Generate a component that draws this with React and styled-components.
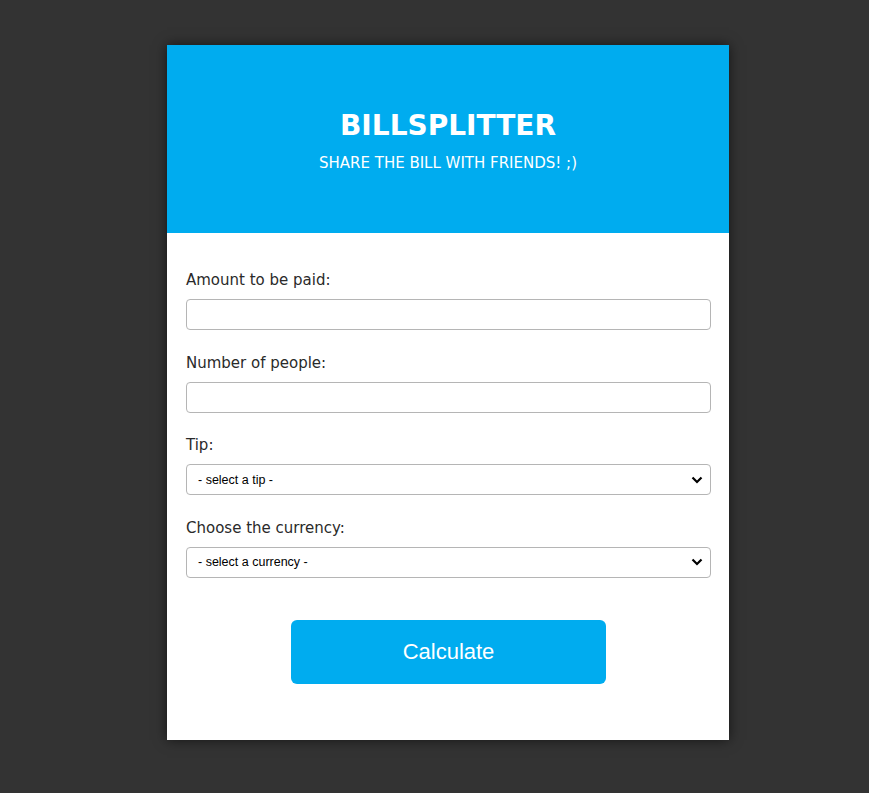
import React from 'react'
import styled, { createGlobalStyle } from 'styled-components'

const GlobalStyle = createGlobalStyle`
body {
    margin: 0;
    background-color: #333333;
    font-family: "DejaVu Sans", "Open Sans", sans-serif;
}
`

const chevron = encodeURIComponent(
  '<svg xmlns="http://www.w3.org/2000/svg" width="12" height="8" viewBox="0 0 12 8"><path d="M1.5 1.5 6 6l4.5-4.5" fill="none" stroke="#000" stroke-width="2.2"/></svg>'
)

const App = () => {
  return (
    <Page>
        <GlobalStyle />
        <Card>

            <Header>
                <Title>BILLSPLITTER</Title>
                <Subtitle>SHARE THE BILL WITH FRIENDS! ;)</Subtitle>
            </Header>

            <Form onSubmit={e => e.preventDefault()}>
                <Field>
                    <Label htmlFor="amount">Amount to be paid:</Label>
                    <Input id="amount" type="text" />
                </Field>

                <Field>
                    <Label htmlFor="people">Number of people:</Label>
                    <Input id="people" type="text" />
                </Field>

                <Field>
                    <Label htmlFor="tip">Tip:</Label>
                    <Select id="tip" defaultValue="">
                        <option value="">- select a tip -</option>
                        <option value="10">10%</option>
                        <option value="15">15%</option>
                        <option value="20">20%</option>
                    </Select>
                </Field>

                <Field>
                    <Label htmlFor="currency">Choose the currency:</Label>
                    <Select id="currency" defaultValue="">
                        <option value="">- select a currency -</option>
                        <option value="eur">EUR</option>
                        <option value="usd">USD</option>
                    </Select>
                </Field>

                <ButtonRow>
                    <Button type="submit">Calculate</Button>
                </ButtonRow>
            </Form>

        </Card>
    </Page>
  )
}

export default App

const Page = styled.div`
padding: 45px 0 53px 167px;
`

const Card = styled.div`
width: 562px;
background-color: #ffffff;
box-shadow: 0 0 12px rgba(0, 0, 0, 0.6);
`

const Header = styled.header`
height: 188px;
background-color: #00acef;
color: #ffffff;
display: flex;
flex-direction: column;
align-items: center;
justify-content: center;
gap: 11px;
padding-top: 2px;
box-sizing: border-box;
`

const Title = styled.h1`
margin: 0;
font-size: 28px;
font-weight: 700;
line-height: 34px;
`

const Subtitle = styled.p`
margin: 0;
font-size: 15px;
line-height: 18px;
`

const Form = styled.form`
padding: 39px 18px 56px 19px;
`

const Field = styled.div`
display: flex;
flex-direction: column;
gap: 10px;
margin-bottom: 24.5px;
`

const Label = styled.label`
font-size: 15px;
line-height: 17px;
color: #2a2a2a;
`

const Input = styled.input`
height: 31px;
box-sizing: border-box;
border: 1px solid #b5b5b5;
border-radius: 4px;
padding: 0 10px;
font-size: 14px;
`

const Select = styled.select`
height: 31px;
box-sizing: border-box;
border: 1px solid #b5b5b5;
border-radius: 4px;
padding: 0 8px 0 11px;
appearance: none;
background: #ffffff url("data:image/svg+xml,${chevron}") no-repeat right 7px center;
font-family: "Liberation Sans", Arial, sans-serif;
font-size: 12.5px;
color: #000000;
`

const ButtonRow = styled.div`
display: flex;
justify-content: center;
padding-top: 17.5px;
`

const Button = styled.button`
width: 315px;
height: 64px;
border: none;
border-radius: 6px;
background-color: #00acef;
color: #ffffff;
font-family: "Liberation Sans", Arial, sans-serif;
font-size: 22px;
cursor: pointer;
`
